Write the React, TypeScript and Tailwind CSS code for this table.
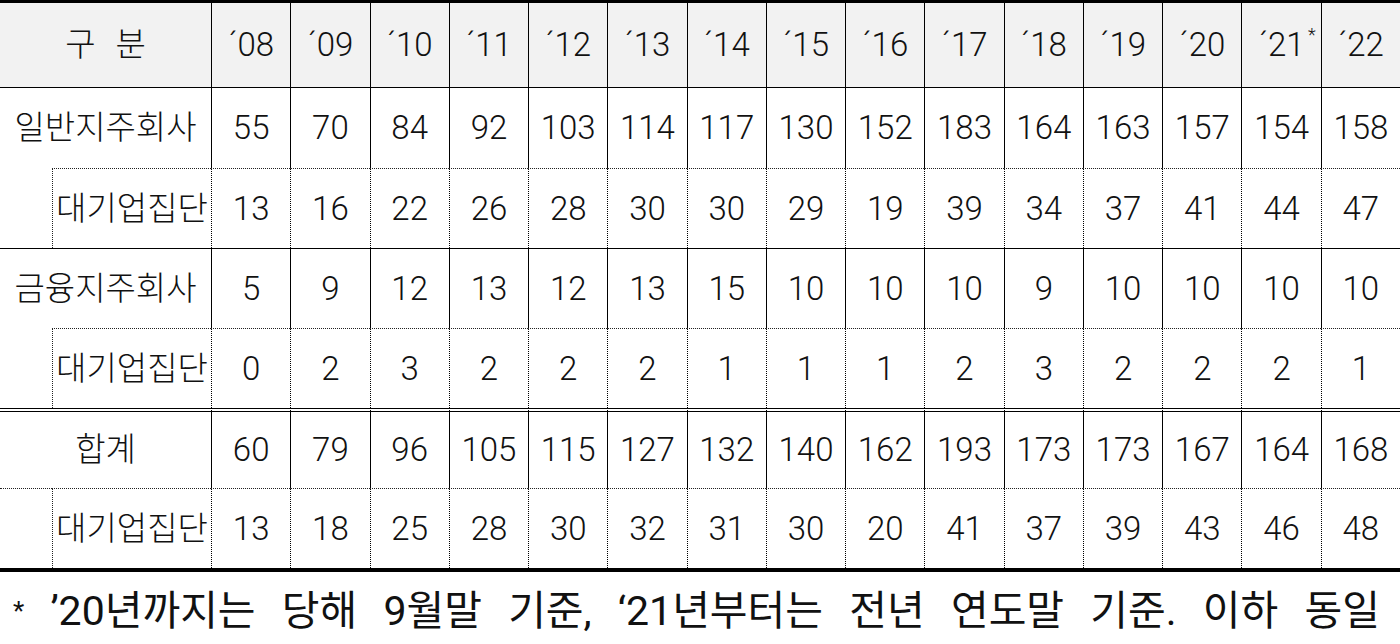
import type { ReactNode } from 'react'

const years = ['08', '09', '10', '11', '12', '13', '14', '15', '16', '17', '18', '19', '20', '21', '22']

const general = [55, 70, 84, 92, 103, 114, 117, 130, 152, 183, 164, 163, 157, 154, 158]
const generalBig = [13, 16, 22, 26, 28, 30, 30, 29, 19, 39, 34, 37, 41, 44, 47]
const finance = [5, 9, 12, 13, 12, 13, 15, 10, 10, 10, 9, 10, 10, 10, 10]
const financeBig = [0, 2, 3, 2, 2, 2, 1, 1, 1, 2, 3, 2, 2, 2, 1]
const total = [60, 79, 96, 105, 115, 127, 132, 140, 162, 193, 173, 173, 167, 164, 168]
const totalBig = [13, 18, 25, 28, 30, 32, 31, 30, 20, 41, 37, 39, 43, 46, 48]

const footer = ['*', '’20년까지는', '당해', '9월말', '기준,', '‘21년부터는', '전년', '연도말', '기준.', '이하', '동일']

function Cell({ className = '', children }: { className?: string; children?: ReactNode }) {
  return <div className={`flex items-center justify-center ${className}`}>{children}</div>
}

export default function App() {
  return (
    <div className="w-[1400px] h-[644px] bg-white text-[#111] font-['Roboto','Noto_Sans_CJK_KR',sans-serif] font-light overflow-hidden">
      <div className="border-t-[3px] border-b-4 border-black">
        <div className="grid grid-cols-[52px_159px_repeat(15,minmax(0,1fr))] grid-rows-[85px_80px_80px_80px_80px_80px_80px] text-[33px]">
          {/* header */}
          <Cell className="col-span-2 bg-[#f2f2f2] border-b border-black gap-5">
            <span>구</span>
            <span>분</span>
          </Cell>
          {years.map((y) => (
            <Cell key={y} className="bg-[#f2f2f2] border-b border-l border-black">
              <span className="relative">
                ´{y}
                {y === '21' && <span className="absolute -right-[11px] top-[1px] text-[18px]">*</span>}
              </span>
            </Cell>
          ))}

          {/* 일반지주회사 */}
          <Cell className="col-span-2">일반지주회사</Cell>
          {general.map((v, i) => (
            <Cell key={i} className="border-l border-black">{v}</Cell>
          ))}
          <div />
          <Cell className="border-t border-l border-dotted border-[#222]">대기업집단</Cell>
          {generalBig.map((v, i) => (
            <Cell key={i} className="border-t border-dotted border-[#222] border-l border-l-solid border-l-black">{v}</Cell>
          ))}

          {/* 금융지주회사 */}
          <Cell className="col-span-2 border-t border-black">금융지주회사</Cell>
          {finance.map((v, i) => (
            <Cell key={i} className="border-t border-l border-black">{v}</Cell>
          ))}
          <div />
          <Cell className="border-t border-l border-dotted border-[#222]">대기업집단</Cell>
          {financeBig.map((v, i) => (
            <Cell key={i} className="border-t border-dotted border-[#222] border-l border-l-solid border-l-black">{v}</Cell>
          ))}

          {/* 합계 */}
          <Cell className="col-span-2 border-t-4 border-double border-black">합계</Cell>
          {total.map((v, i) => (
            <Cell key={i} className="border-t-4 border-double border-black border-l border-l-solid">{v}</Cell>
          ))}
          <div className="border-t border-dotted border-[#222]" />
          <Cell className="border-t border-l border-dotted border-[#222]">대기업집단</Cell>
          {totalBig.map((v, i) => (
            <Cell key={i} className="border-t border-dotted border-[#222] border-l border-l-solid border-l-black">{v}</Cell>
          ))}
        </div>
      </div>

      <div className="flex h-[70px] items-center justify-between pt-2 pl-[13px] pr-[20px] text-[41px] font-normal leading-none">
        {footer.map((w, i) => (
          <span key={i} className={i === 0 ? 'text-[26px]' : ''}>{w}</span>
        ))}
      </div>
    </div>
  )
}
